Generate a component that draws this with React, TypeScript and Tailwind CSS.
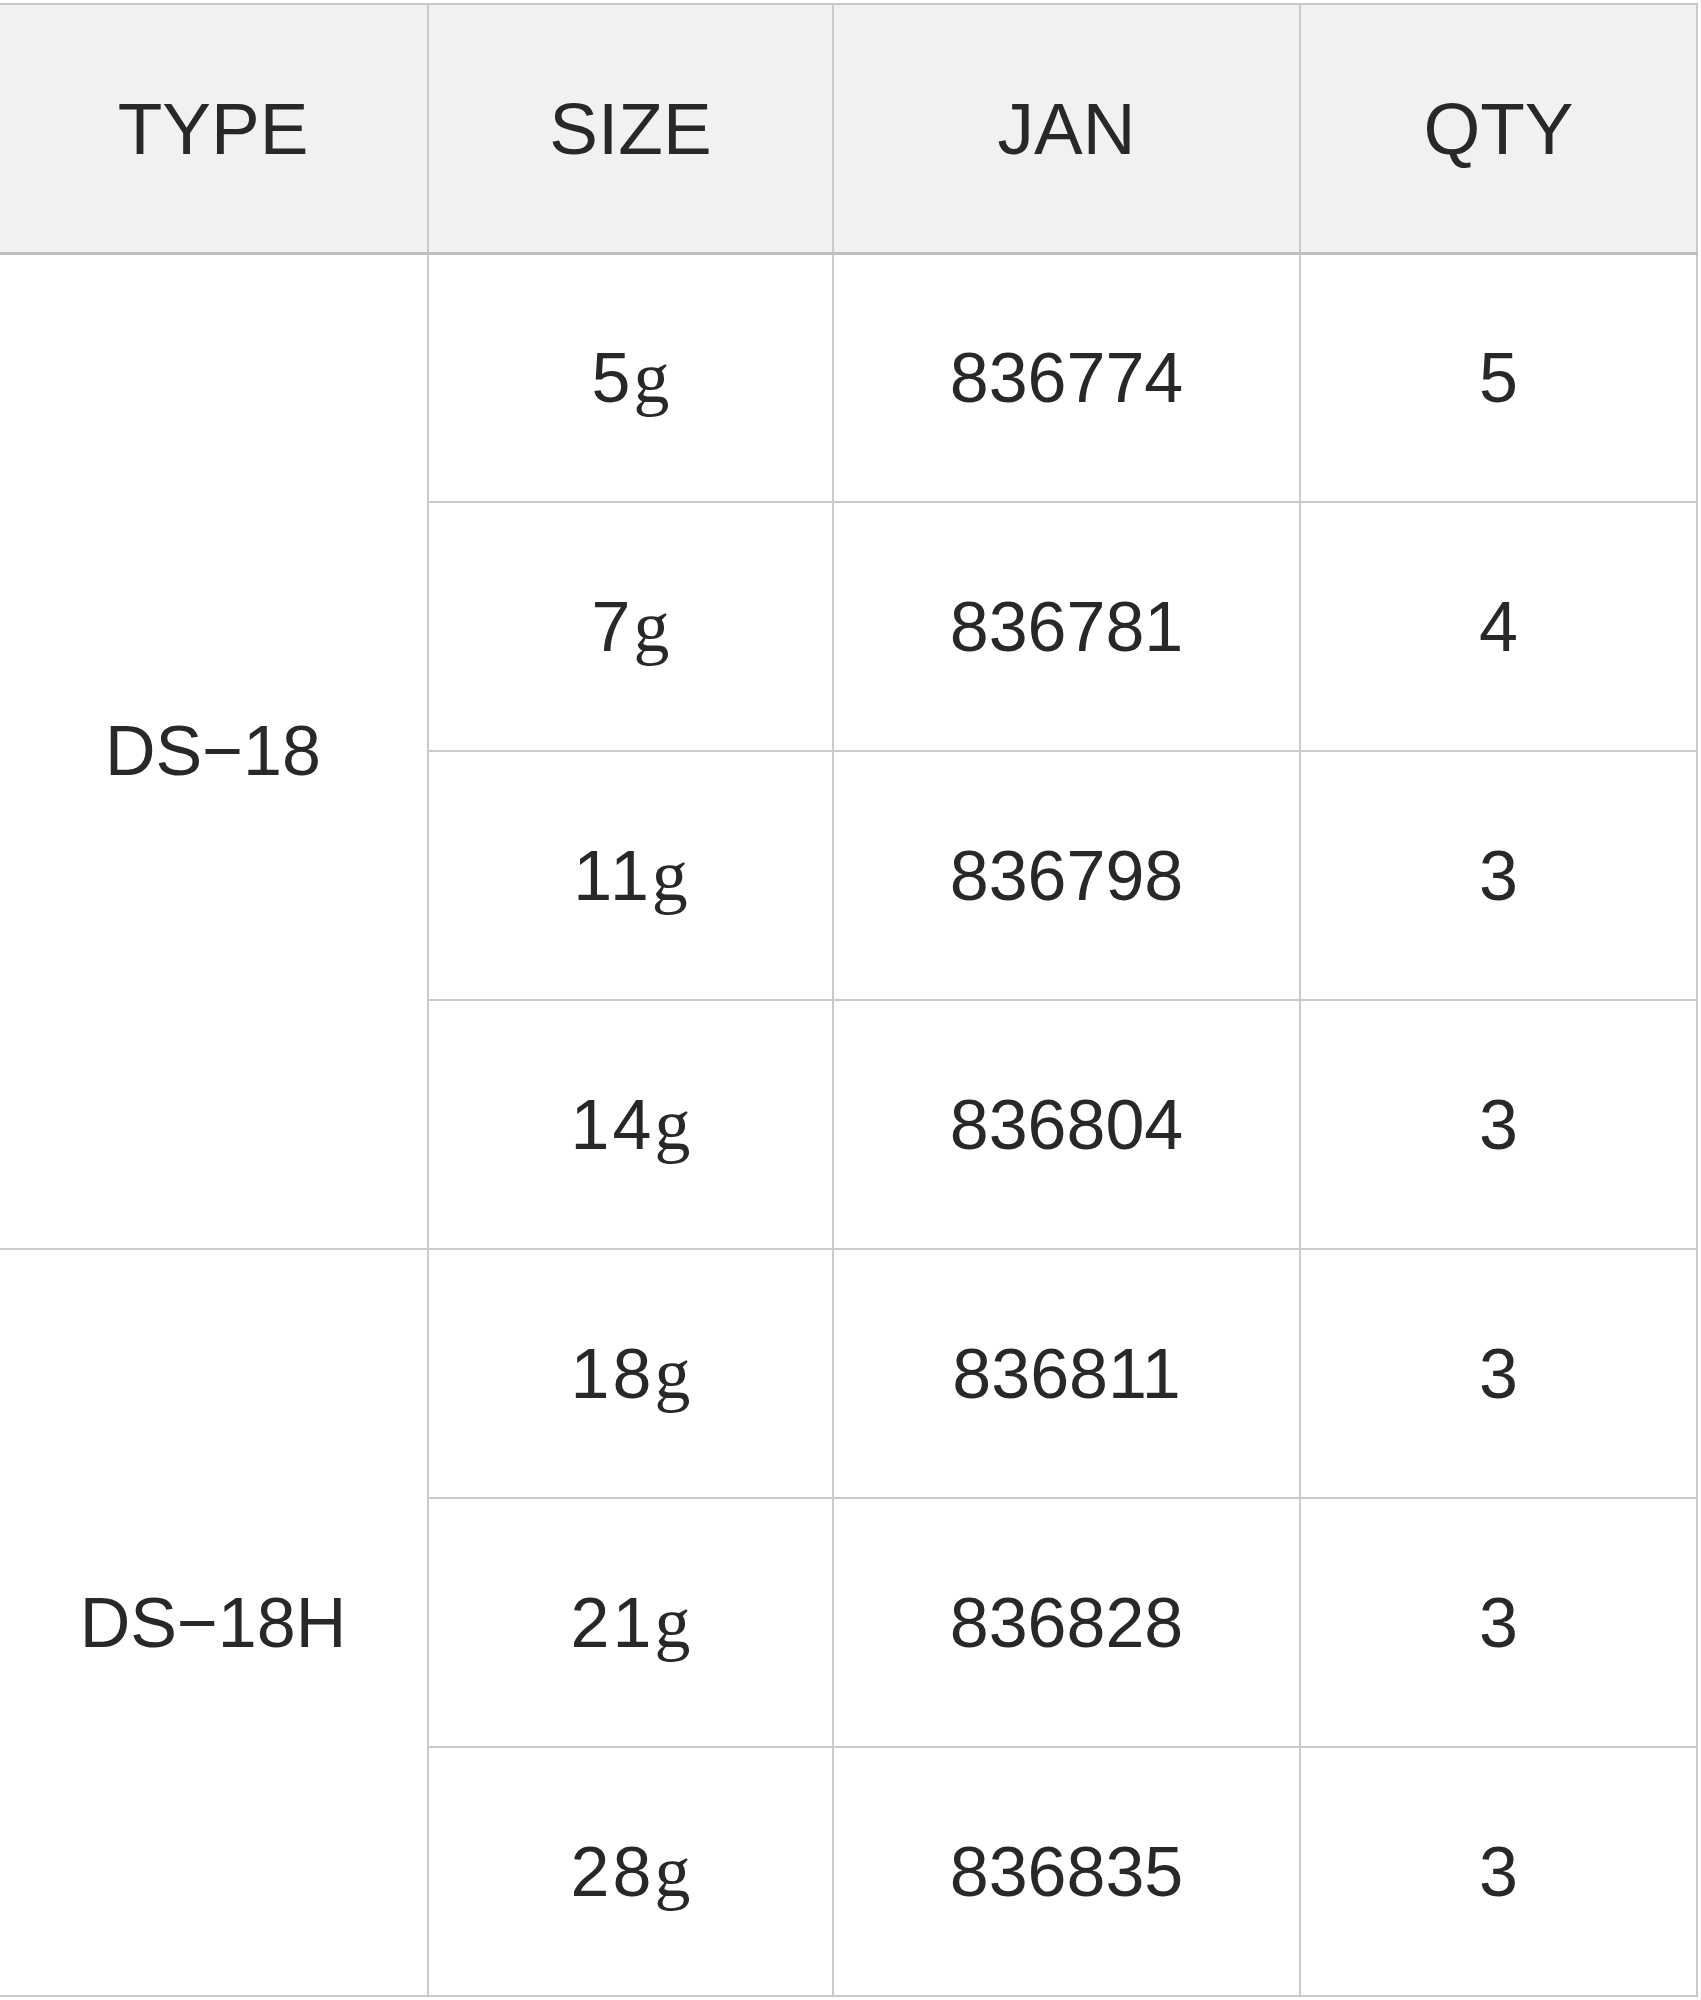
import React from "react";

type Row = { size: string; jan: string; qty: string };

const groups: { type: string; rows: Row[] }[] = [
  {
    type: "DS−18",
    rows: [
      { size: "5", jan: "836774", qty: "5" },
      { size: "7", jan: "836781", qty: "4" },
      { size: "11", jan: "836798", qty: "3" },
      { size: "14", jan: "836804", qty: "3" },
    ],
  },
  {
    type: "DS−18H",
    rows: [
      { size: "18", jan: "836811", qty: "3" },
      { size: "21", jan: "836828", qty: "3" },
      { size: "28", jan: "836835", qty: "3" },
    ],
  },
];

const cell = "border-2 border-[#cacaca] text-center align-middle p-0";

export default function App() {
  return (
    <div className="w-[1701px] min-h-[2000px] bg-white pt-[3px] font-['Liberation_Sans',Arial,sans-serif] text-[#282828]">
      <table className="table-fixed border-collapse w-[1698px] -ml-[1px]">
        <colgroup>
          <col className="w-[429px]" />
          <col className="w-[405px]" />
          <col className="w-[467px]" />
          <col className="w-[397px]" />
        </colgroup>
        <thead>
          <tr className="h-[249px] bg-[#f1f1f1] text-[73px] leading-none">
            <th className={`${cell} border-l-0 border-b-[3px] border-b-[#bfbfbf] font-normal`}>TYPE</th>
            <th className={`${cell} border-b-[3px] border-b-[#bfbfbf] font-normal`}>SIZE</th>
            <th className={`${cell} border-b-[3px] border-b-[#bfbfbf] font-normal`}>JAN</th>
            <th className={`${cell} border-b-[3px] border-b-[#bfbfbf] font-normal`}>QTY</th>
          </tr>
        </thead>
        <tbody className="text-[70px] leading-none">
          {groups.map((g) =>
            g.rows.map((r, i) => (
              <tr key={g.type + r.jan} className="h-[249px]">
                {i === 0 && (
                  <td rowSpan={g.rows.length} className={`${cell} border-l-0`}>
                    {g.type}
                  </td>
                )}
                <td className={cell}>
                  <span className="tracking-[3px]">{r.size}</span>
                  <span className="font-['Liberation_Serif',serif] text-[72px]">g</span>
                </td>
                <td className={cell}>{r.jan}</td>
                <td className={cell}>{r.qty}</td>
              </tr>
            ))
          )}
        </tbody>
      </table>
    </div>
  );
}
